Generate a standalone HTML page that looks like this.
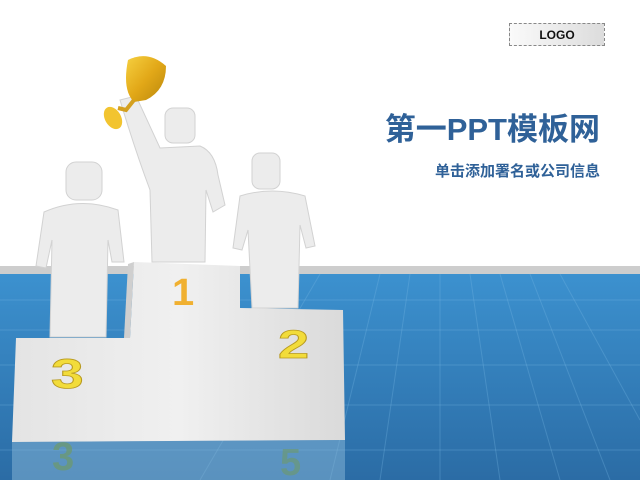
<!DOCTYPE html>
<html><head><meta charset="utf-8"><style>
body{margin:0;width:640px;height:480px;overflow:hidden;background:#fff;position:relative;font-family:"Liberation Sans","Noto Sans CJK SC",sans-serif}
.logo{position:absolute;left:509px;top:23px;width:96px;height:23px;border:1px dashed #888;background:linear-gradient(90deg,#fafafa,#dcdcdc);font:bold 12px "Liberation Sans",sans-serif;text-align:center;line-height:23px;color:#111;box-sizing:border-box}
.t1{position:absolute;right:40px;top:104px;font-size:31px;font-weight:bold;color:#2f6198}
.t2{position:absolute;right:40px;top:160px;font-size:15px;font-weight:bold;color:#2f6198}
</style></head><body>
<svg width="640" height="480" style="position:absolute;left:0;top:0">
<defs>
<linearGradient id="fl" x1="0" y1="0" x2="0" y2="1"><stop offset="0" stop-color="#3c91cf"/><stop offset="1" stop-color="#2b6ca5"/></linearGradient>
<linearGradient id="bd" x1="0" y1="0" x2="1" y2="0"><stop offset="0" stop-color="#e4e4e4"/><stop offset="0.5" stop-color="#f0f0f0"/><stop offset="1" stop-color="#dadada"/></linearGradient>
<linearGradient id="gd" x1="0" y1="0" x2="1" y2="1"><stop offset="0" stop-color="#f6d040"/><stop offset="0.5" stop-color="#e2a818"/><stop offset="1" stop-color="#b8860b"/></linearGradient>
</defs>
<rect x="0" y="266" width="640" height="8" fill="#cdcdcd"/>
<rect x="0" y="274" width="640" height="206" fill="url(#fl)"/>
<g stroke="#7ab8e4" stroke-opacity="0.3" stroke-width="1">
<line x1="0" y1="300" x2="640" y2="300"/><line x1="0" y1="330" x2="640" y2="330"/><line x1="0" y1="365" x2="640" y2="365"/><line x1="0" y1="405" x2="640" y2="405"/><line x1="0" y1="450" x2="640" y2="450"/>
<line x1="320" y1="274" x2="200" y2="480"/><line x1="380" y1="274" x2="330" y2="480"/><line x1="440" y1="274" x2="440" y2="480"/><line x1="500" y1="274" x2="560" y2="480"/><line x1="560" y1="274" x2="640" y2="420"/><line x1="410" y1="274" x2="380" y2="480"/><line x1="470" y1="274" x2="500" y2="480"/><line x1="530" y1="274" x2="610" y2="480"/>
</g>
<polygon points="12,442 345,440 345,480 12,480" fill="#8ab7d8" opacity="0.5"/>
<text x="52" y="470" font-family="Liberation Sans" font-weight="bold" font-size="40" fill="#6e9a6a" opacity="0.7">3</text>
<text x="280" y="475" font-family="Liberation Sans" font-weight="bold" font-size="38" fill="#6e9a6a" opacity="0.6">5</text>
<g fill="#ececec" stroke="#d2d2d2" stroke-width="1">
<rect x="66" y="162" width="36" height="38" rx="10"/>
<path d="M44,212 Q80,196 118,210 L124,262 L112,262 L108,240 L106,337 L50,337 L52,240 L46,268 L36,266 Z"/>
<path d="M120,100 L136,96 L160,148 L200,146 Q215,152 218,175 L225,205 L213,212 L206,190 L205,262 L152,262 L150,190 Q135,150 120,100 Z"/>
<rect x="165" y="108" width="30" height="35" rx="8"/>
<rect x="252" y="153" width="28" height="36" rx="8"/>
<path d="M240,196 Q272,186 305,196 L315,246 L306,248 L300,225 L298,308 L252,308 L248,230 L242,250 L233,248 Z"/>
</g>
<path d="M128,60 Q148,50 166,66 Q166,90 146,100 L134,102 Q122,90 128,60 Z" fill="url(#gd)"/>
<path d="M134,100 L126,110 L118,108" stroke="#d4a020" stroke-width="4" fill="none"/>
<ellipse cx="113" cy="118" rx="8" ry="12" transform="rotate(-30 113 118)" fill="#f2c430"/>
<polygon points="134,262 240,266 240,308 343,310 345,440 12,442 16,338 130,338" fill="url(#bd)"/>
<polygon points="128,264 134,262 130,338 124,338" fill="#cfcfcf"/>
<text x="172" y="305" font-family="Liberation Sans" font-weight="bold" font-size="38" fill="#f0b030" transform="translate(172 0) scale(1.05 1) translate(-172 0)">1</text>
<text x="278" y="358" font-family="Liberation Sans" font-weight="bold" font-size="40" fill="#f2dc3a" stroke="#b89a20" stroke-width="0.8" transform="translate(278 0) scale(1.4 1) translate(-278 0)">2</text>
<text x="51" y="388" font-family="Liberation Sans" font-weight="bold" font-size="42" fill="#f2dc3a" stroke="#b89a20" stroke-width="0.8" transform="translate(51 0) scale(1.4 1) translate(-51 0)">3</text>
</svg>
<div class="logo">LOGO</div>
<div class="t1">第一PPT模板网</div>
<div class="t2">单击添加署名或公司信息</div>
</body></html>
